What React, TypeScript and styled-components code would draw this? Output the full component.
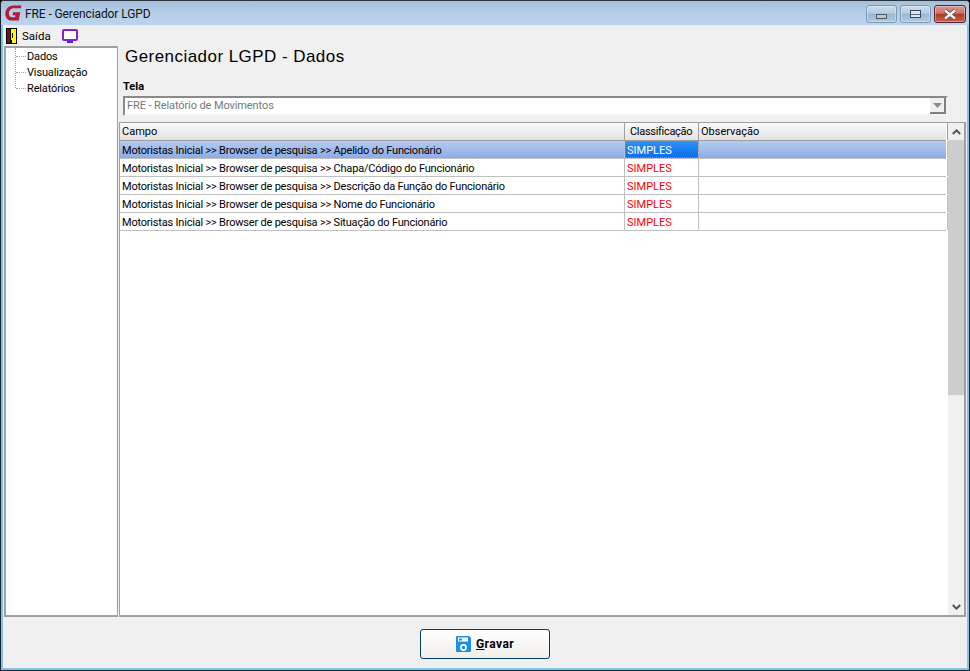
import React from "react";
import styled, { createGlobalStyle } from "styled-components";

const UI_FONT = `Roboto, "Liberation Sans", Arial, sans-serif`;

const rows = [
  "Motoristas Inicial >> Browser de pesquisa >> Apelido do Funcionário",
  "Motoristas Inicial >> Browser de pesquisa >> Chapa/Código do Funcionário",
  "Motoristas Inicial >> Browser de pesquisa >> Descrição da Função do Funcionário",
  "Motoristas Inicial >> Browser de pesquisa >> Nome do Funcionário",
  "Motoristas Inicial >> Browser de pesquisa >> Situação do Funcionário",
];

const App = () => {
  return (
    <Window>
      <GlobalStyle />
      <TitleBar>
        <Logo viewBox="0 0 18 17">
          <path
            d="M17.5 0.5H8.5C4.2 0.5 1 3.8.4 7.8-.3 12.6 2.6 16.5 7 16.5h7.6l1.6-8.8H8.6l-.6 3.2h3.2l-.4 2.2H7.6c-2.4 0-3.9-2.2-3.5-5 .4-2.7 2.6-4.6 5-4.6h7.7z"
            fill="#b5193a"
          />
        </Logo>
        <TitleText>FRE - Gerenciador LGPD</TitleText>
        <WindowButtons>
          <WindowButton>
            <MinGlyph />
          </WindowButton>
          <WindowButton>
            <MaxGlyph />
          </WindowButton>
          <CloseButton>
            <svg width="16" height="11" viewBox="0 0 16 11">
              <path d="M3 1.5 L13 9.5 M13 1.5 L3 9.5" stroke="#4a4a4a" strokeWidth="4" />
              <path d="M3 1.5 L13 9.5 M13 1.5 L3 9.5" stroke="#f4f4f4" strokeWidth="2.4" />
            </svg>
          </CloseButton>
        </WindowButtons>
      </TitleBar>

      <MenuBar>
        <svg width="11" height="16" viewBox="0 0 11 16">
          <rect width="11" height="16" fill="#000" />
          <rect x="1" y="1" width="3" height="14" fill="#7a1410" />
          <path d="M5 1h5v14H6v-3H5z" fill="#ffff00" />
          <rect x="6" y="5" width="1" height="5" fill="#000" />
        </svg>
        <MenuLabel>Saída</MenuLabel>
        <svg width="16" height="14" viewBox="0 0 16 14">
          <rect x="1" y="1" width="14" height="10" rx="1" fill="#fff" stroke="#8a1fd0" strokeWidth="2" />
          <rect x="5" y="12" width="6" height="2" fill="#4a30c0" />
        </svg>
      </MenuBar>

      <Body>
        <TreePanel>
          <TreeList>
            <TreeItem>Dados</TreeItem>
            <TreeItem>Visualização</TreeItem>
            <TreeItem>Relatórios</TreeItem>
          </TreeList>
        </TreePanel>

        <Content>
          <Heading>Gerenciador LGPD - Dados</Heading>
          <FieldLabel>Tela</FieldLabel>
          <Combo>
            <ComboText>FRE - Relatório de Movimentos</ComboText>
            <ComboArrow>
              <svg width="9" height="5" viewBox="0 0 9 5">
                <path d="M0 0h9L4.5 5z" fill="#8c8c8c" />
              </svg>
            </ComboArrow>
          </Combo>

          <Grid>
            <Table>
              <HeaderRow>
                <HeaderCell $width={505}>Campo</HeaderCell>
                <HeaderCell $width={74} $indent={5} $tight>Classificação</HeaderCell>
                <HeaderCell $width={249}>Observação</HeaderCell>
              </HeaderRow>
              {rows.map((text, i) => (
                <Row key={text} $selected={i === 0}>
                  <FieldCell $width={505}>{text}</FieldCell>
                  <ClassCell $width={74} $focused={i === 0}>SIMPLES</ClassCell>
                  <Cell $width={249} />
                </Row>
              ))}
            </Table>
            <ScrollBar>
              <ScrollButton>
                <svg width="9" height="6" viewBox="0 0 9 6">
                  <path d="M.8 5 4.5 1.4 8.2 5" fill="none" stroke="#505050" strokeWidth="2" />
                </svg>
              </ScrollButton>
              <ScrollThumb />
              <ScrollTrack />
              <ScrollButton>
                <svg width="9" height="6" viewBox="0 0 9 6">
                  <path d="M.8 1 4.5 4.6 8.2 1" fill="none" stroke="#505050" strokeWidth="2" />
                </svg>
              </ScrollButton>
            </ScrollBar>
          </Grid>
        </Content>
      </Body>

      <Footer>
        <SaveButton>
          <svg width="15" height="16" viewBox="0 0 15 16">
            <path d="M1 0h12l2 2v13a1 1 0 0 1-1 1H1a1 1 0 0 1-1-1V1a1 1 0 0 1 1-1z" fill="#1e8fe8" />
            <rect x="2" y="1.5" width="10" height="4" fill="#fff" />
            <rect x="3" y="2.5" width="3" height="2" fill="#1e8fe8" />
            <circle cx="7.5" cy="11.5" r="2.6" fill="none" stroke="#fff" strokeWidth="1.6" />
          </svg>
          <SaveLabel>
            <u>G</u>ravar
          </SaveLabel>
        </SaveButton>
      </Footer>
    </Window>
  );
};

export default App;

const GlobalStyle = createGlobalStyle`
  html, body {
    margin: 0;
    padding: 0;
    background: #000;
  }
  * {
    box-sizing: border-box;
  }
`;

const Window = styled.div`
  width: 970px;
  height: 671px;
  display: flex;
  flex-direction: column;
  overflow: hidden;
  background: #f0f0f0;
  border: 1px solid #1a2430;
  border-top-color: #28323c;
  border-radius: 4px 4px 0 0;
  box-shadow: inset 0 0 0 2px #7fc4ee;
  font-family: ${UI_FONT};
  font-size: 11px;
  color: #000;
`;

const TitleBar = styled.div`
  height: 24px;
  flex: none;
  display: flex;
  align-items: center;
  padding: 0 3px 0 4px;
  background: linear-gradient(#a5c0d8, #b4cfe7 50%, #b9d4ec);
  border-radius: 3px 3px 0 0;
`;

const Logo = styled.svg`
  width: 17px;
  height: 16px;
  flex: none;
`;

const TitleText = styled.span`
  margin: 2px 0 0 3px;
  font-size: 12px;
  letter-spacing: -0.1px;
  color: #111;
`;

const WindowButtons = styled.div`
  margin-left: auto;
  display: flex;
  gap: 3px;
  align-self: flex-start;
  margin-top: 4px;
`;

const WindowButton = styled.div`
  width: 31px;
  height: 18px;
  display: flex;
  align-items: center;
  justify-content: center;
  border: 1px solid #7d98b2;
  border-radius: 3px;
  background: linear-gradient(#c9dcec, #b5cde3 45%, #97b7d4 50%, #b0cbe3);
  box-shadow: inset 0 0 0 1px rgba(255, 255, 255, 0.35);
`;

const MinGlyph = styled.span`
  width: 11px;
  height: 5px;
  margin-top: 4px;
  background: #c8c8c8;
  border: 1px solid #4c5560;
`;

const MaxGlyph = styled.span`
  width: 11px;
  height: 8px;
  background: linear-gradient(#dbe6f0 3px, #5a6a7a 3px, #5a6a7a 4px, #dbe6f0 4px);
  border: 1px solid #3e4a58;
`;

const CloseButton = styled(WindowButton)`
  width: 32px;
  border-color: #5c2030;
  background: linear-gradient(#d9998f, #c9776a 45%, #b23a25 52%, #c2604c);
`;

const MenuBar = styled.div`
  height: 21px;
  flex: none;
  display: flex;
  align-items: center;
  padding: 0 0 0 3px;
  background: #f0f0f0;
  margin: 0 2px;

  & > svg:last-child {
    margin-left: 11px;
  }
`;

const MenuLabel = styled.span`
  margin-left: 5px;
  font-size: 11.5px;
`;

const Body = styled.div`
  flex: 1;
  min-height: 0;
  display: flex;
  gap: 1px;
  padding: 0 3px 0 3px;
`;

const TreePanel = styled.div`
  width: 114px;
  flex: none;
  background: #fff;
  border: 2px solid #a0a0a0;
  border-right-width: 1px;
  padding: 0 0 0 9px;
`;

const TreeList = styled.ul`
  list-style: none;
  margin: 0;
  padding: 0;
  border-left: 1px dotted #a0a0a0;
  height: 40px;
`;

const TreeItem = styled.li`
  height: 16px;
  display: flex;
  align-items: center;
  font-size: 11px;
  letter-spacing: -0.15px;

  &::before {
    content: "";
    width: 10px;
    margin-right: 1px;
    border-top: 1px dotted #a0a0a0;
  }
`;

const Content = styled.div`
  flex: 1;
  min-width: 0;
  display: flex;
  flex-direction: column;
`;

const Heading = styled.h1`
  margin: 0;
  height: 32px;
  padding: 1px 0 0 6px;
  font-family: "Liberation Sans", Arial, sans-serif;
  font-size: 17px;
  line-height: 20px;
  font-weight: 400;
  letter-spacing: 0.45px;
`;

const FieldLabel = styled.div`
  height: 18px;
  padding: 1px 0 0 4px;
  font-size: 11px;
  line-height: 16px;
  font-weight: 700;
`;

const Combo = styled.div`
  height: 20px;
  margin: 0 18px 6px 4px;
  flex: none;
  display: flex;
  align-items: stretch;
  background: #fff;
  border: 2px solid #8a8a8a;
  border-right-color: #f4f4f4;
  border-bottom-color: #f4f4f4;
`;

const ComboText = styled.div`
  flex: 1;
  padding-left: 2px;
  line-height: 16px;
  letter-spacing: -0.1px;
  color: #777;
`;

const ComboArrow = styled.div`
  width: 16px;
  display: flex;
  align-items: center;
  justify-content: center;
  background: #f0f0f0;
  border-right: 2px solid #808080;
  border-bottom: 2px solid #808080;
`;

const Grid = styled.div`
  flex: 1;
  min-height: 0;
  display: flex;
  background: #fff;
  border: 1px solid #a0a0a0;
  border-width: 1px 2px 2px 1px;
`;

const Table = styled.div`
  flex: 1;
  min-width: 0;
  display: flex;
  flex-direction: column;
`;

const HeaderRow = styled.div`
  height: 18px;
  flex: none;
  display: flex;
  background: linear-gradient(#fafafa, #e2e2e2);
  border-bottom: 1px solid #a0a0a0;
`;

const HeaderCell = styled.div<{ $width: number; $indent?: number; $tight?: boolean }>`
  width: ${(p) => p.$width}px;
  flex: none;
  padding-left: ${(p) => p.$indent ?? 2}px;
  letter-spacing: ${(p) => (p.$tight ? "-0.3px" : "0")};
  line-height: 18px;
  white-space: nowrap;
  border-right: 1px solid #a0a0a0;
`;

const Row = styled.div<{ $selected?: boolean }>`
  height: 18px;
  flex: none;
  display: flex;
  border-bottom: 1px solid #c0c0c0;
  background: ${(p) => (p.$selected ? "linear-gradient(#b4cbf0, #8dabe6)" : "#fff")};
`;

const Cell = styled.div<{ $width: number }>`
  width: ${(p) => p.$width}px;
  flex: none;
  padding-left: 2px;
  line-height: 19px;
  white-space: nowrap;
  border-right: 1px solid #c0c0c0;
`;

const FieldCell = styled(Cell)`
  letter-spacing: -0.2px;
`;

const ClassCell = styled(Cell)<{ $focused?: boolean }>`
  color: ${(p) => (p.$focused ? "#fff" : "#ff0000")};
  background: ${(p) => (p.$focused ? "linear-gradient(#2e92f5, #0a6cf0)" : "transparent")};
  outline: ${(p) => (p.$focused ? "1px dotted #c08040" : "none")};
  outline-offset: -1px;
`;

const ScrollBar = styled.div`
  width: 16px;
  flex: none;
  display: flex;
  flex-direction: column;
  margin-left: 2px;
  background: #f0f0f0;
`;

const ScrollButton = styled.div`
  height: 17px;
  flex: none;
  display: flex;
  align-items: center;
  justify-content: center;
`;

const ScrollThumb = styled.div`
  height: 255px;
  flex: none;
  background: #cdcdcd;
`;

const ScrollTrack = styled.div`
  flex: 1;
`;

const Footer = styled.div`
  height: 51px;
  flex: none;
  display: flex;
  justify-content: center;
  padding-top: 12px;
  margin-bottom: 2px;
`;

const SaveButton = styled.div`
  width: 130px;
  height: 30px;
  display: flex;
  align-items: center;
  justify-content: center;
  gap: 5px;
  border: 1px solid #003c74;
  border-radius: 3px;
  background: linear-gradient(#fff, #f2eee9);
`;

const SaveLabel = styled.span`
  font-size: 12px;
  font-weight: 700;
  letter-spacing: 0.45px;
`;
